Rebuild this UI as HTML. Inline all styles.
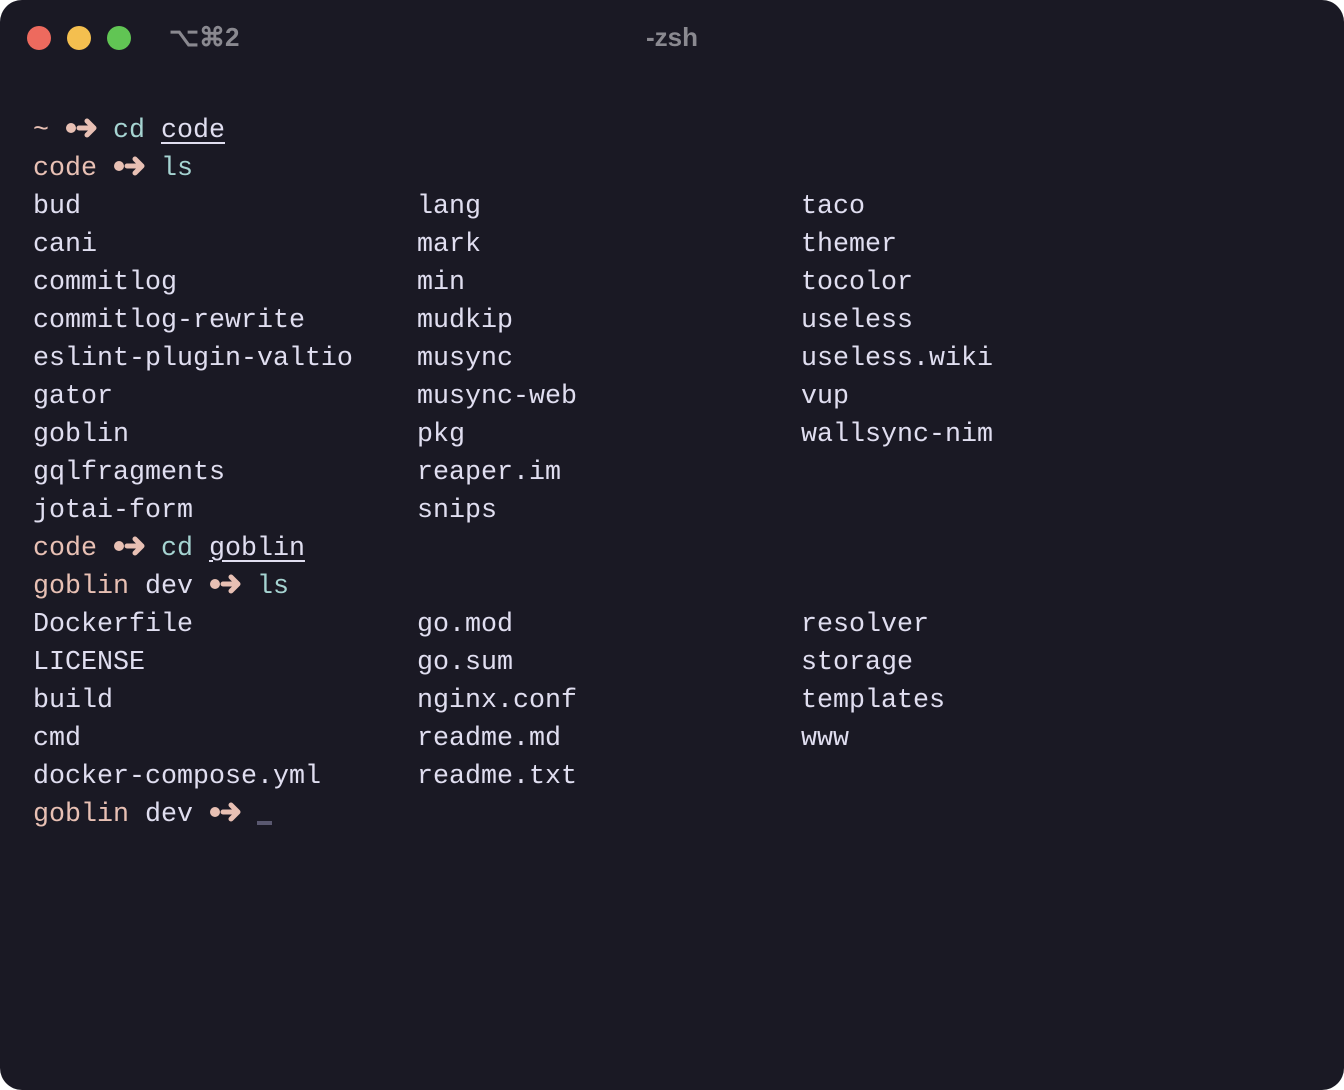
<!DOCTYPE html>
<html><head><meta charset="utf-8"><style>
html,body{margin:0;padding:0;background:#fff;}
.win{position:absolute;left:0;top:0;width:1344px;height:1090px;background:#1a1924;border-radius:22px;overflow:hidden;}
.dot{position:absolute;top:26px;width:24px;height:24px;border-radius:50%;}
.t{position:absolute;top:22px;font:bold 26px "Liberation Sans",sans-serif;color:#8a8990;}
.term{position:absolute;left:33px;top:112px;font-family:"Liberation Mono",monospace;font-size:26.67px;line-height:38px;color:#e0def0;}
.p{color:#e8c0b4}.c{color:#a6d4d2}.u{text-decoration:underline;text-underline-offset:5px;text-decoration-thickness:2px}
.ar{display:inline-block;width:32px;height:20px;vertical-align:-1px;}
.row{height:38px;position:relative;white-space:pre}
.row span.col{position:absolute;top:0}
.cur{display:inline-block;width:15px;height:4px;background:#5a5870;vertical-align:-4px;}
</style></head><body><div class="win">
<div class="dot" style="left:27px;background:#ed6a5e"></div>
<div class="dot" style="left:67px;background:#f4bf4f"></div>
<div class="dot" style="left:107px;background:#61c554"></div>
<div class="t" style="left:169px">⌥⌘2</div>
<div class="t" style="left:0;width:1344px;text-align:center">-zsh</div>
<div class="term"><div class="row"><span class="p">~ <svg class="ar" viewBox="0 0 32 20"><circle cx="6" cy="10" r="5" fill="#e8c0b4"/><path d="M14 10H29M22 3L29 10L22 17" stroke="#e8c0b4" stroke-width="5" fill="none" stroke-linecap="round" stroke-linejoin="round"/></svg></span> <span class="c">cd</span> <span class="u">code</span></div><div class="row"><span class="p">code <svg class="ar" viewBox="0 0 32 20"><circle cx="6" cy="10" r="5" fill="#e8c0b4"/><path d="M14 10H29M22 3L29 10L22 17" stroke="#e8c0b4" stroke-width="5" fill="none" stroke-linecap="round" stroke-linejoin="round"/></svg></span> <span class="c">ls</span></div><div class="row"><span class="col" style="left:0">bud</span><span class="col" style="left:384px">lang</span><span class="col" style="left:768px">taco</span></div><div class="row"><span class="col" style="left:0">cani</span><span class="col" style="left:384px">mark</span><span class="col" style="left:768px">themer</span></div><div class="row"><span class="col" style="left:0">commitlog</span><span class="col" style="left:384px">min</span><span class="col" style="left:768px">tocolor</span></div><div class="row"><span class="col" style="left:0">commitlog-rewrite</span><span class="col" style="left:384px">mudkip</span><span class="col" style="left:768px">useless</span></div><div class="row"><span class="col" style="left:0">eslint-plugin-valtio</span><span class="col" style="left:384px">musync</span><span class="col" style="left:768px">useless.wiki</span></div><div class="row"><span class="col" style="left:0">gator</span><span class="col" style="left:384px">musync-web</span><span class="col" style="left:768px">vup</span></div><div class="row"><span class="col" style="left:0">goblin</span><span class="col" style="left:384px">pkg</span><span class="col" style="left:768px">wallsync-nim</span></div><div class="row"><span class="col" style="left:0">gqlfragments</span><span class="col" style="left:384px">reaper.im</span></div><div class="row"><span class="col" style="left:0">jotai-form</span><span class="col" style="left:384px">snips</span></div><div class="row"><span class="p">code <svg class="ar" viewBox="0 0 32 20"><circle cx="6" cy="10" r="5" fill="#e8c0b4"/><path d="M14 10H29M22 3L29 10L22 17" stroke="#e8c0b4" stroke-width="5" fill="none" stroke-linecap="round" stroke-linejoin="round"/></svg></span> <span class="c">cd</span> <span class="u">goblin</span></div><div class="row"><span class="p">goblin</span> dev <span class="p"><svg class="ar" viewBox="0 0 32 20"><circle cx="6" cy="10" r="5" fill="#e8c0b4"/><path d="M14 10H29M22 3L29 10L22 17" stroke="#e8c0b4" stroke-width="5" fill="none" stroke-linecap="round" stroke-linejoin="round"/></svg></span> <span class="c">ls</span></div><div class="row"><span class="col" style="left:0">Dockerfile</span><span class="col" style="left:384px">go.mod</span><span class="col" style="left:768px">resolver</span></div><div class="row"><span class="col" style="left:0">LICENSE</span><span class="col" style="left:384px">go.sum</span><span class="col" style="left:768px">storage</span></div><div class="row"><span class="col" style="left:0">build</span><span class="col" style="left:384px">nginx.conf</span><span class="col" style="left:768px">templates</span></div><div class="row"><span class="col" style="left:0">cmd</span><span class="col" style="left:384px">readme.md</span><span class="col" style="left:768px">www</span></div><div class="row"><span class="col" style="left:0">docker-compose.yml</span><span class="col" style="left:384px">readme.txt</span></div><div class="row"><span class="p">goblin</span> dev <span class="p"><svg class="ar" viewBox="0 0 32 20"><circle cx="6" cy="10" r="5" fill="#e8c0b4"/><path d="M14 10H29M22 3L29 10L22 17" stroke="#e8c0b4" stroke-width="5" fill="none" stroke-linecap="round" stroke-linejoin="round"/></svg></span> <span class="cur"></span></div></div>
</div></body></html>
